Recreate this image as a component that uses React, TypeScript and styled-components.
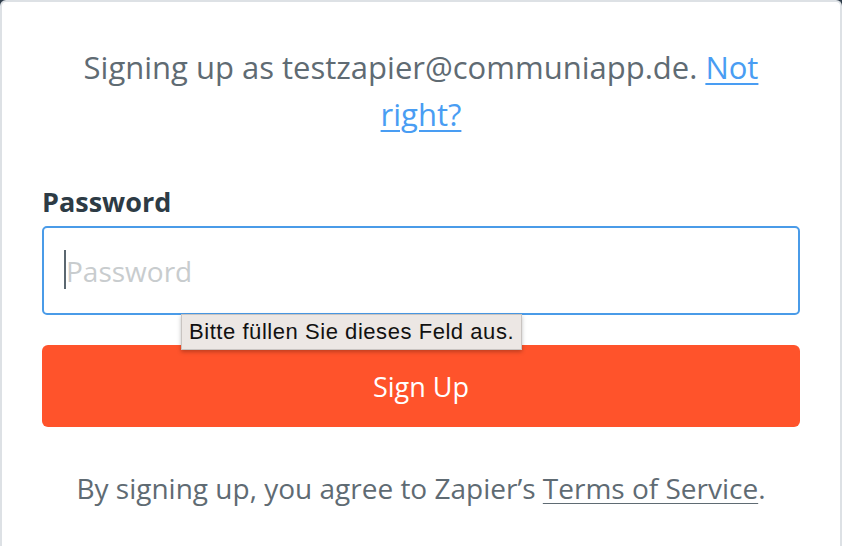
import React from 'react'
import styled, { createGlobalStyle } from 'styled-components'

const GlobalStyle = createGlobalStyle`
	html, body {
		margin: 0;
		padding: 0;
		background: #2f3d4b;
		overflow: hidden;
	}
	body {
		font-family: 'Open Sans', 'Noto Sans', sans-serif;
	}
`

function App() {
	return (
		<>
			<GlobalStyle />
			<Card>
				<Intro>
					Signing up as testzapier@communiapp.de. <BlueLink href='#'>Not right?</BlueLink>
				</Intro>
				<Field>
					<Label htmlFor='password'>Password</Label>
					<InputWrap>
						<Caret />
						<Input id='password' type='password' placeholder='Password' />
						<Tooltip>Bitte füllen Sie dieses Feld aus.</Tooltip>
					</InputWrap>
				</Field>
				<SignUpButton type='button'>Sign Up</SignUpButton>
				<Terms>
					By signing up, you agree to Zapier’s <GreyLink href='#'>Terms of Service</GreyLink>.
				</Terms>
			</Card>
		</>
	)
}

const Card = styled.div`
	box-sizing: border-box;
	width: 842px;
	height: 560px;
	background: #fff;
	border: 2px solid #dde1e5;
	border-bottom: none;
	border-radius: 6px 6px 0 0;
	padding: 42px 40px 0;
	display: flex;
	flex-direction: column;
`

const Intro = styled.p`
	margin: 0;
	padding: 0 40px;
	text-align: center;
	font-size: 31px;
	line-height: 47px;
	color: #5f6b73;
`

const BlueLink = styled.a`
	color: #499df3;
	text-decoration: underline;
	text-underline-offset: 4px;
	text-decoration-thickness: 2px;
`

const Field = styled.div`
	margin-top: 46px;
	display: flex;
	flex-direction: column;
`

const Label = styled.label`
	font-size: 27px;
	font-weight: 700;
	line-height: 36px;
	color: #2d3b45;
	margin-bottom: 6px;
`

const InputWrap = styled.div`
	position: relative;
	display: flex;
`

const Input = styled.input`
	box-sizing: border-box;
	width: 100%;
	height: 89px;
	border: 2px solid #4a9be8;
	border-radius: 5px;
	padding: 0 22px;
	font-family: 'Open Sans', 'Noto Sans', sans-serif;
	font-size: 28px;
	color: #2d3b45;
	outline: none;
	&::placeholder {
		color: #c8ccce;
	}
`

const Caret = styled.span`
	position: absolute;
	left: 22px;
	top: 24px;
	width: 2px;
	height: 39px;
	background: #5b6770;
`

const Tooltip = styled.div`
	position: absolute;
	left: 139px;
	top: 88px;
	padding: 5px 7px 5px;
	background: #ece7e4;
	border: 1px solid #c9c4c1;
	box-shadow: 0 2px 4px rgba(0, 0, 0, 0.25);
	font-family: 'Liberation Sans', Arial, sans-serif;
	font-size: 22px;
	letter-spacing: 0.55px;
	line-height: 24px;
	color: #111;
	white-space: nowrap;
	z-index: 2;
`

const SignUpButton = styled.button`
	margin-top: 30px;
	height: 82px;
	border: none;
	border-radius: 6px;
	background: #ff532b;
	color: #fff;
	font-family: 'Open Sans', 'Noto Sans', sans-serif;
	font-size: 27px;
	cursor: pointer;
`

const Terms = styled.p`
	margin: 41px 0 0;
	text-align: center;
	font-size: 28px;
	line-height: 40px;
	color: #5f6b73;
`

const GreyLink = styled.a`
	color: #5f6b73;
	text-decoration: underline;
	text-underline-offset: 4px;
	text-decoration-thickness: 1px;
`

export default App
